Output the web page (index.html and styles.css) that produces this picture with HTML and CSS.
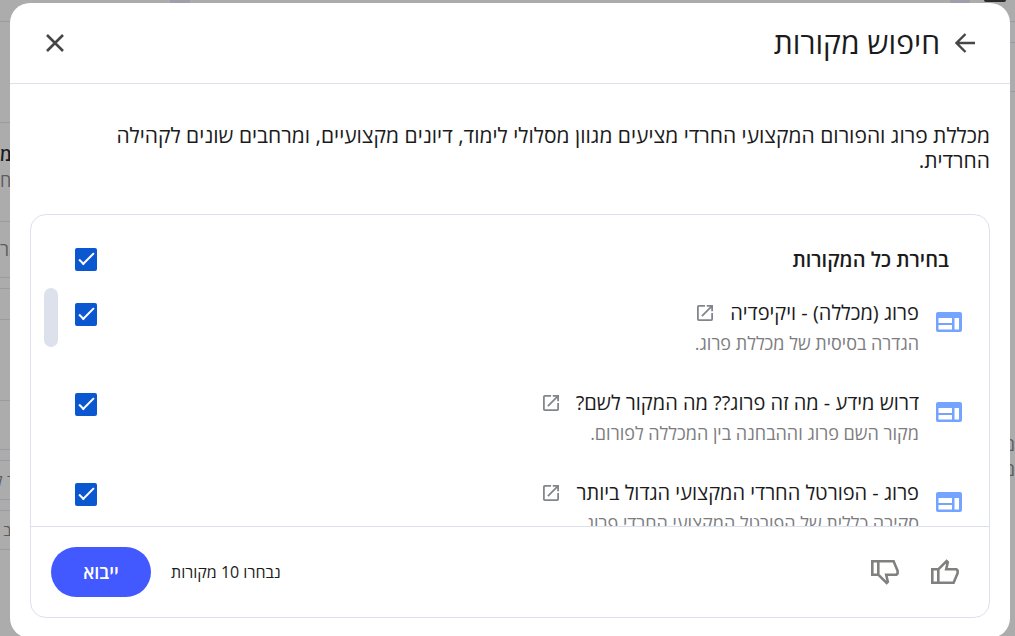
FILE: index.html
```html
<!DOCTYPE html>
<html lang="he" dir="rtl">
<head>
    <meta charset="UTF-8">
    <meta name="viewport" content="width=device-width, initial-scale=1.0">
    <title>חיפוש מקורות</title>
    <link rel="stylesheet" href="styles.css">
</head>
<body>
<svg class="sprite">
    <symbol id="web" viewBox="0 0 26 20">
        <path fill-rule="evenodd" d="M2 0h22a2 2 0 0 1 2 2v16a2 2 0 0 1-2 2H2a2 2 0 0 1-2-2V2a2 2 0 0 1 2-2zM2.500 6v5h13.500V6zM2.500 13v4.500h13.500v-4.500zM18.500 6v11.500h4.500V6z"/>
    </symbol>
    <symbol id="open" viewBox="3 3 18 18">
        <path d="M19 19H5V5h7V3H5a2 2 0 0 0-2 2v14a2 2 0 0 0 2 2h14a2 2 0 0 0 2-2v-7h-2zM14 3v2h3.6l-9.8 9.8 1.4 1.4L19 6.4V10h2V3z"/>
    </symbol>
    <symbol id="thumb" viewBox="0 0 28 26">
        <path fill="none" stroke="currentColor" stroke-width="2.6" stroke-linejoin="miter" d="M1.3 10.3h6v13.4h-6zM7.3 10.3L15.6 2l1.2 1.2-1.6 7.1h10.2l1.2 1.3v2.6l-4 9.5H7.3"/>
    </symbol>
</svg>
<div class="app">
    <div class="app-bar">
        <i class="chip"></i>
        <i class="chip"></i>
        <i class="avatar"></i>
    </div>
    <div class="app-body">
        <div class="chat">
            <div class="chat-head"></div>
            <div class="chat-tools"></div>
            <p>ם</p>
            <p>ם</p>
        </div>
        <div class="studio">
            <div class="studio-head"></div>
            <div class="studio-intro"><b>מ</b><span>ח</span></div>
            <div class="studio-search">מר</div>
            <div class="studio-gap"></div>
            <div class="studio-row"></div>
            <div class="studio-list"></div>
            <div class="studio-note"></div>
            <div class="studio-gap"></div>
            <div class="studio-item">ר ל</div>
            <div class="studio-gap"></div>
            <div class="studio-item">ב ו</div>
        </div>
    </div>
</div>
<div class="overlay">
    <div class="dialog" role="dialog" aria-labelledby="title">
        <header class="dialog-head">
            <button class="icon-btn" aria-label="חזרה">
                <svg width="20" height="20" viewBox="0 0 20 20" fill="none" stroke="currentColor" stroke-width="2.4"><path d="M20 10H1.5M10.5 1L1.5 10l9 9"/></svg>
            </button>
            <h1 id="title">חיפוש מקורות</h1>
            <button class="icon-btn" aria-label="סגירה">
                <svg width="18" height="18" viewBox="0 0 18 18" fill="none" stroke="currentColor" stroke-width="2.6"><path d="M1 1l16 16M17 1L1 17"/></svg>
            </button>
        </header>
        <div class="dialog-body">
            <p class="summary">מכללת פרוג והפורום המקצועי החרדי מציעים מגוון מסלולי לימוד, דיונים מקצועיים, ומרחבים שונים לקהילה החרדית.</p>
            <div class="card">
                <div class="select-all">
                    <label for="all">בחירת כל המקורות</label>
                    <input type="checkbox" id="all" checked>
                </div>
                <div class="list">
                    <i class="scroll-thumb"></i>
                    <div class="source">
                        <svg class="source-icon"><use href="#web"/></svg>
                        <div class="source-text">
                            <div class="source-title">
                                <label for="s1">פרוג (מכללה) - ויקיפדיה</label>
                                <a href="#" aria-label="פתיחה"><svg><use href="#open"/></svg></a>
                            </div>
                            <p>הגדרה בסיסית של מכללת פרוג.</p>
                        </div>
                        <input type="checkbox" id="s1" checked>
                    </div>
                    <div class="source">
                        <svg class="source-icon"><use href="#web"/></svg>
                        <div class="source-text">
                            <div class="source-title">
                                <label for="s2">דרוש מידע - מה זה פרוג?? מה המקור לשם?</label>
                                <a href="#" aria-label="פתיחה"><svg><use href="#open"/></svg></a>
                            </div>
                            <p>מקור השם פרוג וההבחנה בין המכללה לפורום.</p>
                        </div>
                        <input type="checkbox" id="s2" checked>
                    </div>
                    <div class="source">
                        <svg class="source-icon"><use href="#web"/></svg>
                        <div class="source-text">
                            <div class="source-title">
                                <label for="s3">פרוג - הפורטל החרדי המקצועי הגדול ביותר</label>
                                <a href="#" aria-label="פתיחה"><svg><use href="#open"/></svg></a>
                            </div>
                            <p>סקירה כללית של הפורטל המקצועי החרדי פרוג.</p>
                        </div>
                        <input type="checkbox" id="s3" checked>
                    </div>
                </div>
                <footer class="card-foot">
                    <button class="icon-btn rate" aria-label="תוצאות טובות"><svg><use href="#thumb"/></svg></button>
                    <button class="icon-btn rate down" aria-label="תוצאות לא טובות"><svg><use href="#thumb"/></svg></button>
                    <span class="count">נבחרו 10 מקורות</span>
                    <button class="import">ייבוא</button>
                </footer>
            </div>
        </div>
    </div>
</div>
</body>
</html>
```

FILE: styles.css
```css
*{
    margin: 0;
    padding: 0;
    box-sizing: border-box;
}
body{
    font-family: "Open Sans", "Noto Sans", sans-serif;
    color: #1b1b1c;
    background: #acacac;
    overflow: hidden;
}
button{
    border: 0;
    background: none;
    font-family: inherit;
    cursor: pointer;
}
.sprite{
    display: none;
}

/* page behind the dialog */
.app{
    height: 100vh;
    overflow: hidden;
    color: #5c5c5e;
    font-size: 18px;
}
.app-bar{
    display: flex;
    height: 3px;
    padding: 0 9px;
}
.avatar{
    order: -1;
    width: 22px;
    height: 2px;
    border-radius: 0 0 4px 4px;
    background: #2a2a2c;
}
.chip{
    width: 20px;
    height: 3px;
    background: #9f9eaa;
}
.chip:first-child{
    margin-right: 14px;
}
.chip + .chip{
    margin-right: auto;
    margin-left: 161px;
}
.app-body{
    display: flex;
    justify-content: space-between;
    padding-top: 18px;
}
.chat{
    width: 13px;
}
.chat-head{
    height: 22px;
    border-top: 1px solid #9a9aa4;
    border-bottom: 1px solid #9a9aa4;
}
.chat-tools{
    height: 49px;
    margin-bottom: 340px;
    border-bottom: 1px solid #9a9aa4;
}
.chat p{
    line-height: 25px;
}
.studio{
    width: 20px;
    direction: ltr;
    white-space: nowrap;
}
.studio > div{
    border-bottom: 1px solid #9a9aa4;
}
.studio .studio-head{
    height: 102px;
    border-top: 1px solid #9a9aa4;
}
.studio-intro{
    height: 99px;
    padding-top: 18px;
    line-height: 26px;
}
.studio-intro b{
    display: block;
    color: #1b1b1c;
    font-weight: 600;
}
.studio-search{
    height: 56px;
    line-height: 54px;
}
.studio-gap{
    height: 11px;
}
.studio-row{
    height: 31px;
}
.studio-list{
    height: 81px;
}
.studio-note{
    height: 49px;
}
.studio-item{
    height: 39px;
    font-size: 16px;
    line-height: 38px;
    text-indent: -5px;
}

.overlay{
    position: fixed;
    inset: 0;
    padding: 3px 5px 0 10px;
    overflow: hidden;
}
.dialog{
    background: #fff;
    border-radius: 20px;
}
.dialog-head{
    display: flex;
    align-items: center;
    height: 81px;
    padding: 0 30px;
    border-bottom: 1px solid #dde1eb;
}
.dialog-head h1{
    flex: 1;
    padding-right: 10px;
    font-size: 30px;
    font-weight: 400;
    line-height: 38px;
}
.icon-btn{
    display: flex;
    align-items: center;
    justify-content: center;
    width: 30px;
    height: 30px;
    color: #444746;
}
.dialog-body{
    padding: 39px 20px 20px;
}
.summary{
    margin-bottom: 41px;
    padding-left: 40px;
    font-size: 21px;
    line-height: 25px;
}
.card{
    border: 1px solid #dde1eb;
    border-radius: 16px;
    overflow: hidden;
}
.select-all{
    display: flex;
    align-items: center;
    justify-content: space-between;
    height: 69px;
    padding: 20px 40px 0 44px;
    font-size: 20px;
    font-weight: 600;
    line-height: 30px;
}
input[type=checkbox]{
    appearance: none;
    position: relative;
    flex: none;
    width: 22px;
    height: 23px;
    border-radius: 2px;
    background: #0b57d0;
}
input[type=checkbox]:checked::after{
    content: "";
    position: absolute;
    left: 8px;
    top: 1px;
    box-sizing: border-box;
    width: 7px;
    height: 16px;
    border: solid #fff;
    border-width: 0 2px 2px 0;
    transform: rotate(45deg);
}
.list{
    position: relative;
    height: 242px;
    overflow: hidden;
}
.scroll-thumb{
    position: absolute;
    left: 13px;
    top: 4px;
    width: 14px;
    height: 59px;
    border-radius: 7px;
    background: #dde1eb;
}
.source{
    display: flex;
    align-items: flex-start;
    height: 90px;
    padding: 14px 27px 0 44px;
}
.source input{
    margin-top: 5px;
}
.source-icon{
    width: 26px;
    height: 20px;
    margin-top: 14px;
    fill: #74a4ff;
}
.source-text{
    flex: 1;
    padding-right: 17px;
}
.source-title{
    display: flex;
    align-items: center;
    gap: 17px;
    font-size: 20px;
    font-weight: 500;
    line-height: 30px;
}
.source-title a{
    display: flex;
}
.source-title svg{
    width: 16px;
    height: 16px;
    fill: #80868b;
}
.source-text p{
    color: #7d7d7f;
    font-size: 18px;
    line-height: 30px;
}
.card-foot{
    display: flex;
    align-items: center;
    height: 91px;
    padding: 0 29px 0 20px;
    border-top: 1px solid #dde1eb;
}
.rate{
    color: #80807f;
}
.rate svg{
    width: 28px;
    height: 26px;
}
.down{
    margin-right: 30px;
}
.down svg{
    transform: scaleY(-1);
}
.count{
    margin-right: auto;
    margin-left: 20px;
    font-size: 16px;
}
.import{
    width: 100px;
    height: 50px;
    border-radius: 25px;
    background: #4259ff;
    color: #fff;
    font-size: 18px;
    font-weight: 600;
}
```
